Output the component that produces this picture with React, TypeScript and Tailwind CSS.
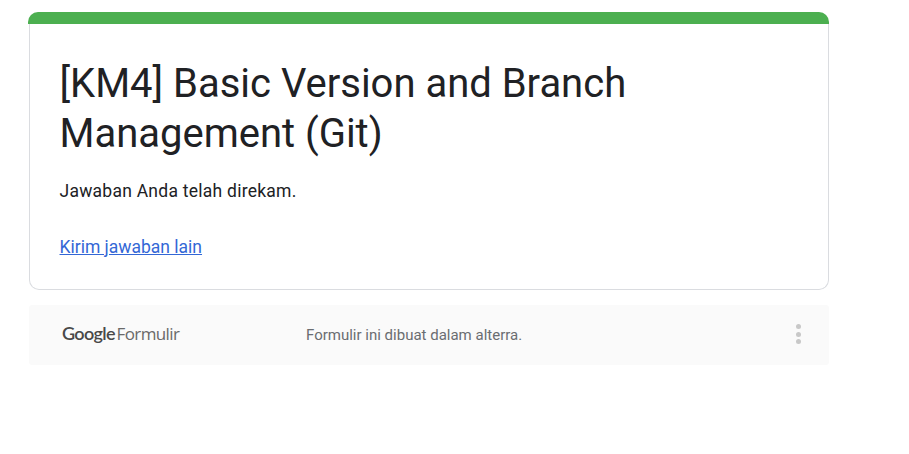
export default function App() {
  return (
    <main className="h-[454px] overflow-hidden bg-white pl-[28px] pt-3 font-['Roboto',sans-serif] text-[#202124]">
      <section className="w-[801px] overflow-hidden rounded-t-[10px] rounded-b-lg">
        <div className="h-3 bg-[#4caf50]" />
        <div className="ml-px h-[266px] rounded-b-[10px] border border-t-0 border-[#dadce0] pl-[29.5px] pr-[30px] pt-[35px]">
          <h1 className="text-[40px] leading-[50px] tracking-[-0.01px]">
            [KM4] Basic Version and Branch
            <br />
            Management (Git)
          </h1>
          <p className="mt-[20px] text-[17.5px] leading-[25px] tracking-[0.25px]">Jawaban Anda telah direkam.</p>
          <a className="mt-[31px] block w-fit text-[17.5px] leading-[25px] text-[#3367d6] underline">Kirim jawaban lain</a>
        </div>
      </section>
      <footer className="ml-px mt-[15px] flex h-[60px] w-[800px] items-center rounded-[3px] bg-[#fafafa] pl-[33px] pr-[28px]">
        <div className="-mt-[3px] flex w-[244px] items-baseline gap-px">
          <span className="w-[53.5px] whitespace-nowrap font-['Lato',sans-serif] text-[18px] font-semibold tracking-[-0.65px] text-[#484848]">Google</span>
          <span className="font-['Open_Sans',sans-serif] text-[17px] font-normal tracking-[-0.6px] text-[#696969]">Formulir</span>
        </div>
        <p className="text-[15px] text-[#6a6d71]">Formulir ini dibuat dalam alterra.</p>
        <div className="-mt-[2px] ml-auto flex flex-col gap-[2.5px]">
          <i className="size-[5px] rounded-full bg-[#c8c8c8]" />
          <i className="size-[5px] rounded-full bg-[#c8c8c8]" />
          <i className="size-[5px] rounded-full bg-[#c8c8c8]" />
        </div>
      </footer>
    </main>
  );
}
